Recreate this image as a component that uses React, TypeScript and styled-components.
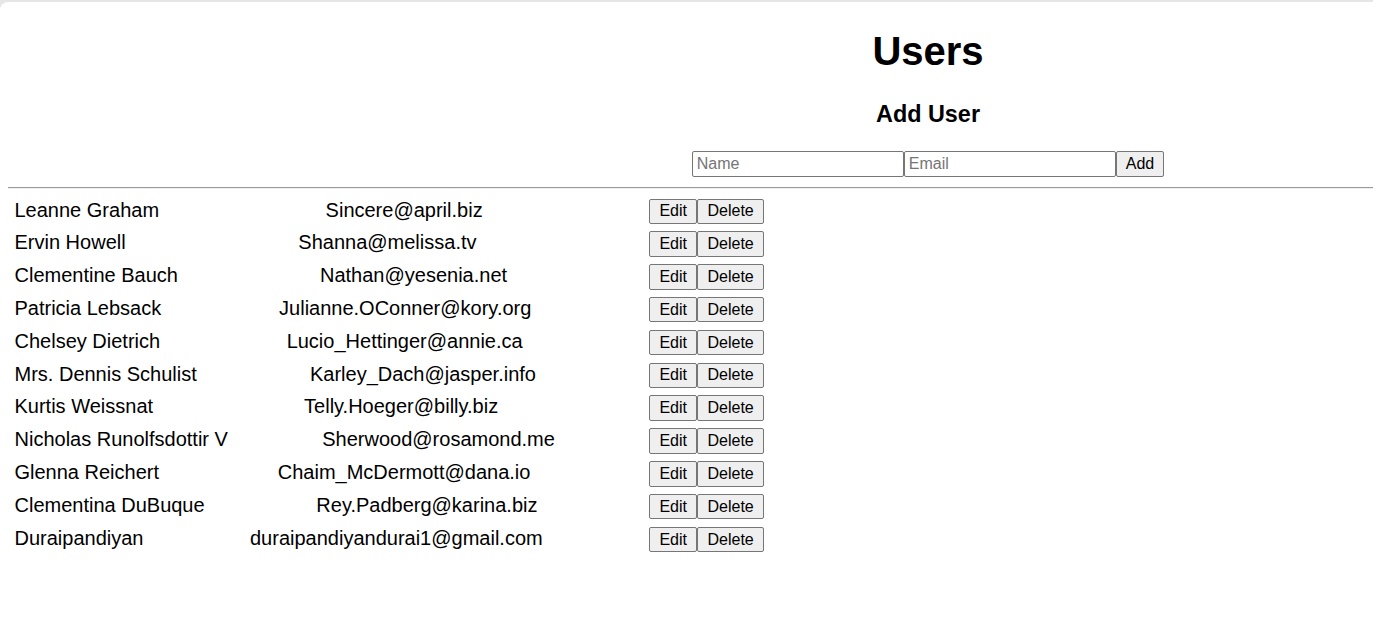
import React, { useState } from "react";
import styled, { createGlobalStyle } from "styled-components";

const GlobalStyle = createGlobalStyle`
  html, body {
    margin: 0;
    padding: 0;
    background: #e6e6e6;
    font-family: "Liberation Sans", Arial, sans-serif;
    color: #000;
  }
`;

const Frame = styled.div`
  margin-top: 2px;
  min-height: calc(100vh - 2px);
  background: #fff;
  border-top-left-radius: 8px;
  padding: 0 0 0 8px;
  box-sizing: border-box;
  overflow: hidden;
`;

const Header = styled.header`
  padding-left: 475px;
  text-align: center;
`;

const Title = styled.h1`
  font-size: 40px;
  font-weight: bold;
  line-height: 46px;
  margin: 26px 0 0;
`;

const SubTitle = styled.h3`
  font-size: 23.4px;
  font-weight: bold;
  line-height: 27px;
  margin: 27px 0 22.5px;
`;

const Form = styled.form`
  display: flex;
  justify-content: center;
`;

const Input = styled.input`
  width: 212px;
  height: 26px;
  box-sizing: border-box;
  border: 1px solid #767676;
  border-radius: 2px;
  padding: 0 4px;
  font-family: "Liberation Sans", Arial, sans-serif;
  font-size: 16px;
  color: #000;
  background: #fff;
  &::placeholder {
    color: #757575;
  }
`;

const Button = styled.button<{ $pad: number; $tall?: boolean }>`
  height: ${(p) => (p.$tall ? 26 : 25.5)}px;
  box-sizing: border-box;
  padding: 0 ${(p) => p.$pad}px;
  border: 1px solid #767676;
  border-radius: 2px;
  background: #efefef;
  font-family: "Liberation Sans", Arial, sans-serif;
  font-size: 16px;
  color: #000;
  cursor: pointer;
`;

const Rule = styled.hr`
  margin: 10px 0;
  border: 0;
  border-top: 1px solid #9a9a9a;
  border-bottom: 1px solid #eeeeee;
  height: 0;
`;

const List = styled.div`
  margin-left: 6.5px;
  width: 749.5px;
`;

const Row = styled.div`
  display: flex;
  justify-content: space-between;
  align-items: flex-start;
  height: 32.84px;
  font-size: 20px;
  line-height: 23px;
`;

const Actions = styled.div`
  display: flex;
`;

const initialUsers = [
  { id: 1, name: "Leanne Graham", email: "Sincere@april.biz" },
  { id: 2, name: "Ervin Howell", email: "Shanna@melissa.tv" },
  { id: 3, name: "Clementine Bauch", email: "Nathan@yesenia.net" },
  { id: 4, name: "Patricia Lebsack", email: "Julianne.OConner@kory.org" },
  { id: 5, name: "Chelsey Dietrich", email: "Lucio_Hettinger@annie.ca" },
  { id: 6, name: "Mrs. Dennis Schulist", email: "Karley_Dach@jasper.info" },
  { id: 7, name: "Kurtis Weissnat", email: "Telly.Hoeger@billy.biz" },
  { id: 8, name: "Nicholas Runolfsdottir V", email: "Sherwood@rosamond.me" },
  { id: 9, name: "Glenna Reichert", email: "Chaim_McDermott@dana.io" },
  { id: 10, name: "Clementina DuBuque", email: "Rey.Padberg@karina.biz" },
  { id: 11, name: "Duraipandiyan", email: "duraipandiyandurai1@gmail.com" },
];

function App() {
  const [users, setUsers] = useState(initialUsers);
  const [name, setName] = useState("");
  const [email, setEmail] = useState("");

  function addUser(e: React.FormEvent) {
    e.preventDefault();
    if (!name || !email) return;
    setUsers([...users, { id: Date.now(), name, email }]);
    setName("");
    setEmail("");
  }

  function deleteUser(id: number) {
    return () => setUsers(users.filter((u) => u.id !== id));
  }

  return (
    <>
      <GlobalStyle />
      <Frame>
        <Header>
          <Title>Users</Title>
          <SubTitle>Add User</SubTitle>
          <Form onSubmit={addUser}>
            <Input
              placeholder="Name"
              value={name}
              onChange={(e) => setName(e.target.value)}
            />
            <Input
              placeholder="Email"
              value={email}
              onChange={(e) => setEmail(e.target.value)}
            />
            <Button type="submit" $pad={9} $tall>
              Add
            </Button>
          </Form>
        </Header>
        <Rule />
        <List>
          {users.map((user) => (
            <Row key={user.id}>
              <span>{user.name}</span>
              <span>{user.email}</span>
              <Actions>
                <Button $pad={9.25}>Edit</Button>
                <Button $pad={9.25} onClick={deleteUser(user.id)}>
                  Delete
                </Button>
              </Actions>
            </Row>
          ))}
        </List>
      </Frame>
    </>
  );
}

export default App;
